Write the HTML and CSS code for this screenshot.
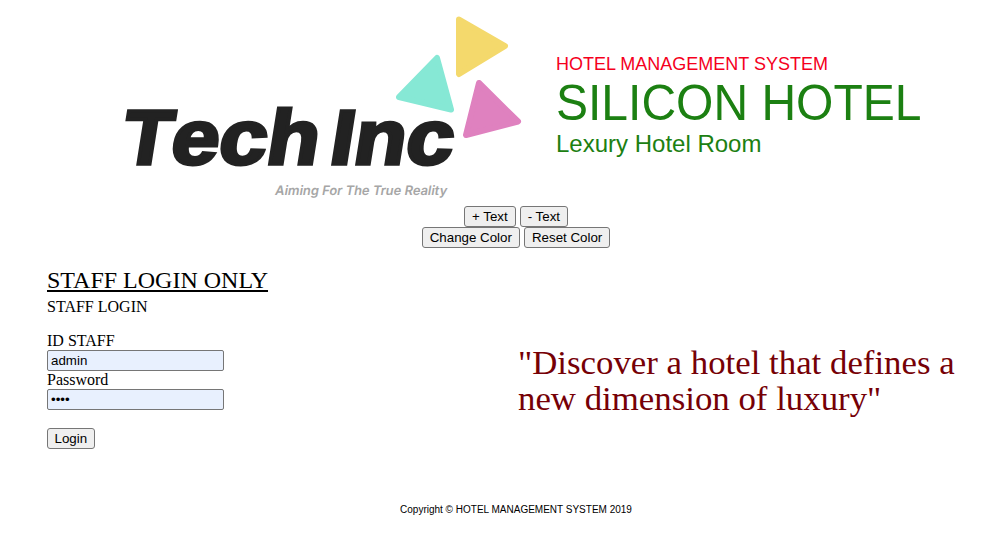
FILE: index.html
```
<!DOCTYPE html>
<html lang="en">
<head>
<meta charset="utf-8">
<title>Hotel Management System</title>
<link rel="stylesheet" href="styles.css">
</head>
<body>
<header class="header">
  <svg class="logo" viewBox="0 0 430 206" role="img" aria-label="Tech Inc">
    <g stroke-width="6" stroke-linejoin="round">
      <path fill="#f4d96c" stroke="#f4d96c" d="M349 19.500 395 46 349 74Z"/>
      <path fill="#86e8d5" stroke="#86e8d5" d="M327 58 341 109.500 289 97Z"/>
      <path fill="#df81bf" stroke="#df81bf" d="M369 83 408 121.500 356 135Z"/>
    </g>
    <text class="wordmark" transform="translate(9.500 163.500) skewX(-9)" textLength="49" lengthAdjust="spacingAndGlyphs">T</text>
    <text class="wordmark" transform="translate(58.500 163.500) skewX(-9)" textLength="148" lengthAdjust="spacingAndGlyphs">ech</text>
    <text class="wordmark" transform="translate(217.500 163.500) skewX(-9)" textLength="123" lengthAdjust="spacingAndGlyphs">Inc</text>
    <text class="tagline" transform="translate(164.500 195) skewX(-10)" textLength="172" lengthAdjust="spacingAndGlyphs">Aiming For The True Reality</text>
  </svg>
  <div class="titles">
    <div class="system">HOTEL MANAGEMENT SYSTEM</div>
    <div class="hotel">SILICON HOTEL</div>
    <div class="room">Lexury Hotel Room</div>
  </div>
</header>
<div class="controls">
  <div class="row"><button>+ Text</button><button>- Text</button></div>
  <div class="row"><button>Change Color</button><button>Reset Color</button></div>
</div>
<main class="main">
  <form class="login">
    <h1 class="heading">STAFF LOGIN ONLY</h1>
    <div class="subheading">STAFF LOGIN</div>
    <label for="staff">ID STAFF</label>
    <input id="staff" type="text" value="admin">
    <label for="pass">Password</label>
    <input id="pass" type="password" value="1234">
    <button class="submit" type="button">Login</button>
  </form>
  <p class="quote"><span class="line">"Discover a hotel that defines a</span> <span class="line">new dimension of luxury"</span></p>
</main>
<footer class="footer">Copyright © HOTEL MANAGEMENT SYSTEM 2019</footer>
</body>
</html>
```
FILE: styles.css
```
body {
  margin: 0;
  padding: 0 12px 0 47px;
  background: #fff;
  color: #000;
  font: 16px/18px "Liberation Serif", serif;
}
.header {
  display: flex;
  height: 206px;
  margin-left: 63px;
}
.logo {
  width: 430px;
  height: 206px;
  flex: none;
}
.wordmark {
  font: 700 77px "Liberation Sans", sans-serif;
  fill: #222;
  stroke: #222;
  stroke-width: 3.5px;
}
.tagline {
  font: 600 13px Inter, sans-serif;
  fill: #a6a6a6;
}
.titles {
  margin: 54px 0 0 16px;
  font-family: "Liberation Sans", sans-serif;
  color: #1c8012;
  white-space: nowrap;
}
.system {
  font-size: 18px;
  line-height: 21px;
  color: #f5001d;
}
.hotel {
  font-size: 48px;
  line-height: 55px;
  transform: scaleY(1.04);
}
.room {
  font-size: 24px;
  line-height: 28px;
}
.row {
  display: flex;
  justify-content: center;
  gap: 4px;
}
button {
  box-sizing: border-box;
  height: 21px;
  padding: 1px 7px;
  border: 1px solid #767676;
  border-radius: 3px;
  background: #efefef;
  color: #000;
  font: 13.333px/15px "Liberation Sans", sans-serif;
}
.main {
  display: flex;
  margin-top: 18px;
  height: 236px;
}
.login {
  display: flex;
  flex-direction: column;
  align-items: flex-start;
  width: 471px;
}
.heading {
  margin: 0;
  font-size: 24px;
  font-weight: 400;
  line-height: 28px;
  text-decoration: underline;
}
.subheading {
  margin: 4px 0 16px;
}
input {
  box-sizing: border-box;
  width: 177px;
  height: 21px;
  padding: 1px 2px 1px 3px;
  border: 1px solid #767676;
  border-radius: 2px;
  background: #e8f0fe;
  color: #000;
  font: 13.333px "Liberation Sans", sans-serif;
}
.submit {
  margin-top: 18px;
  padding: 1px 6.5px;
}
.quote {
  margin: 79px 0 0;
  color: #760006;
  font-size: 33px;
  line-height: 36px;
  white-space: nowrap;
  transform: scaleX(1.055);
  transform-origin: left top;
}
.line {
  display: block;
}
.footer {
  font: 10px/12px "Liberation Sans", sans-serif;
  text-align: center;
  margin-top: 2px;
}
```
